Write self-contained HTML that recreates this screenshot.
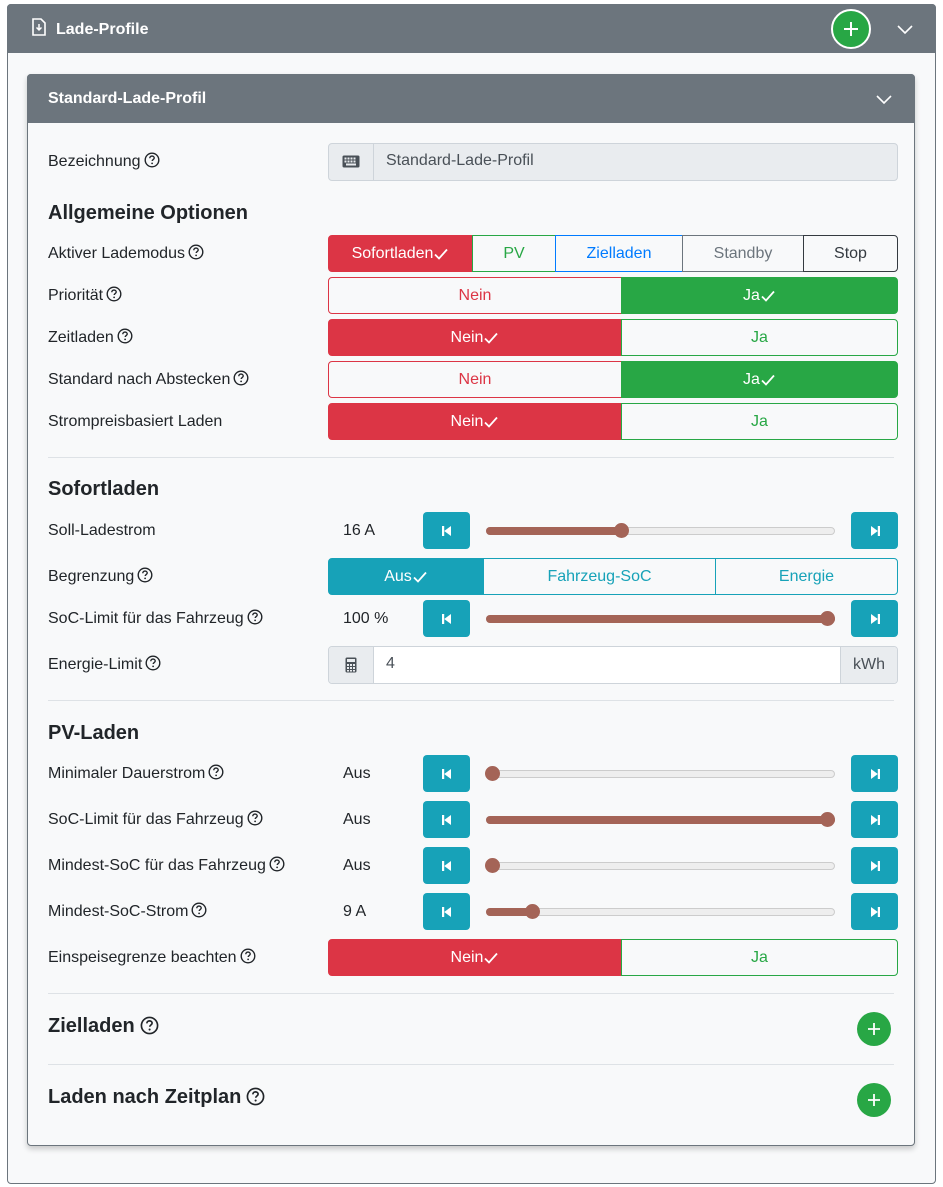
<!DOCTYPE html>
<html><head><meta charset="utf-8">
<style>
*{box-sizing:border-box}
body{margin:0;width:943px;height:1187px;background:#fff;font-family:"Liberation Sans",sans-serif;color:#212529;position:relative;overflow:hidden}
.a{position:absolute}
.lbl{position:absolute;left:48px;height:37px;line-height:38px;font-size:16px;white-space:nowrap}
.q{display:inline-block;vertical-align:-2px;margin-left:3px}
.h{position:absolute;left:48px;font-size:20px;font-weight:bold;white-space:nowrap}
.seg{position:absolute;height:37px;display:flex;align-items:center;justify-content:center;font-size:16px;border:1px solid;padding-top:1px}
.hr{position:absolute;left:48px;width:846px;height:1px;background:#dee2e6}
.btn{position:absolute;width:47px;height:37px;background:#17a2b8;border-radius:4px;display:flex;align-items:center;justify-content:center}
.trk{position:absolute;left:486px;width:349px;height:8px;border-radius:4px;background:#eee;border:1px solid #ccc}
.fill{position:absolute;left:486px;height:8px;border-radius:4px;background:#a46457}
.th{position:absolute;width:15px;height:15px;border-radius:50%;background:#a46457}
.val{position:absolute;left:343px;height:37px;line-height:38px;font-size:16px}
.plus{position:absolute;width:34px;height:34px;border-radius:50%;background:#28a745;display:flex;align-items:center;justify-content:center}
</style></head><body>
<svg width="0" height="0" style="position:absolute"><defs>
<symbol id="q" viewBox="0 0 16 16"><circle cx="8" cy="8" r="6.8" fill="none" stroke="#212529" stroke-width="1.4"/><path d="M5.8 6.2c0-1.3 1-2.1 2.2-2.1s2.2.8 2.2 1.9c0 1.5-2 1.6-2 3" fill="none" stroke="#212529" stroke-width="1.4"/><circle cx="8.1" cy="11.4" r=".9" fill="#212529"/></symbol>
<symbol id="ck" viewBox="0 0 16 16"><path d="M2 8.5l4 4 8-9" fill="none" stroke="currentColor" stroke-width="1.8"/></symbol>
</defs></svg>

<div class="a" style="left:7px;top:4px;width:929px;height:1180px;border:1px solid #6c757d;border-radius:4px;background:#f8f9fa"></div>
<div class="a" style="left:7px;top:4px;width:929px;height:49px;background:#6c757d;border-radius:4px 4px 0 0"></div>
<svg class="a" style="left:31px;top:18px" width="16" height="19" viewBox="0 0 16 19"><path d="M2 1h8l4 4v12H2z" fill="none" stroke="#fff" stroke-width="1.6"/><path d="M8 6v6M5.5 9.5L8 12l2.5-2.5" fill="none" stroke="#fff" stroke-width="1.5"/></svg>
<div class="a" style="left:56px;top:21px;color:#fff;font-weight:bold;font-size:16px">Lade-Profile</div>
<div class="a" style="left:831px;top:9px;width:40px;height:40px;border-radius:50%;background:#28a745;border:2px solid #fff;display:flex;align-items:center;justify-content:center"><svg width="16" height="16"><path d="M8 1v14M1 8h14" stroke="#fff" stroke-width="2"/></svg></div>
<svg class="a" style="left:897px;top:25px" width="16" height="10"><path d="M1 1l7 7 7-7" fill="none" stroke="#fff" stroke-width="1.6"/></svg>

<div class="a" style="left:27px;top:74px;width:888px;height:1072px;border:1px solid #6c757d;border-radius:4px;background:#f8f9fa;box-shadow:0 3px 6px rgba(0,0,0,.2)"></div>
<div class="a" style="left:27px;top:74px;width:888px;height:49px;background:#6c757d;border-radius:4px 4px 0 0"></div>
<div class="a" style="left:48px;top:90px;color:#fff;font-weight:bold;font-size:16px">Standard-Lade-Profil</div>
<svg class="a" style="left:876px;top:95px" width="16" height="10"><path d="M1 1l7 7 7-7" fill="none" stroke="#fff" stroke-width="1.6"/></svg>

<div class="lbl" style="top:143px">Bezeichnung<svg class="q" width="16" height="16"><use href="#q"/></svg></div>
<div class="a" style="left:328px;top:143px;width:570px;height:38px;border:1px solid #ced4da;border-radius:4px;background:#e9ecef"></div>
<div class="a" style="left:373px;top:143px;width:1px;height:38px;background:#ced4da"></div>
<svg class="a" style="left:342px;top:155px" width="18" height="13" viewBox="0 0 18 13"><rect x="0.5" y="0.5" width="17" height="12" rx="1.5" fill="#495057"/><g fill="#e9ecef"><rect x="2.5" y="2.5" width="2" height="2"/><rect x="5.5" y="2.5" width="2" height="2"/><rect x="8.5" y="2.5" width="2" height="2"/><rect x="11.5" y="2.5" width="2" height="2"/><rect x="2.5" y="5.5" width="2" height="2"/><rect x="5.5" y="5.5" width="2" height="2"/><rect x="8.5" y="5.5" width="2" height="2"/><rect x="11.5" y="5.5" width="2" height="2"/><rect x="4" y="8.5" width="10" height="2"/></g></svg>
<div class="a" style="left:386px;top:152px;font-size:16px;color:#495057">Standard-Lade-Profil</div>

<div class="h" style="top:202px">Allgemeine Optionen</div>

<div class="lbl" style="top:235px">Aktiver Lademodus<svg class="q" width="16" height="16"><use href="#q"/></svg></div>
<div class="seg" style="left:328px;top:235px;width:145px;background:#dc3545;border-color:#dc3545;color:#fff;border-radius:4px 0 0 4px">Sofortladen<svg width="16" height="16" style="color:#fff"><use href="#ck"/></svg></div>
<div class="seg" style="left:472px;top:235px;width:84px;border-color:#28a745;color:#28a745">PV</div>
<div class="seg" style="left:555px;top:235px;width:128px;border-color:#007bff;color:#007bff">Zielladen</div>
<div class="seg" style="left:682px;top:235px;width:122px;border-color:#6c757d;color:#6c757d">Standby</div>
<div class="seg" style="left:803px;top:235px;width:95px;border-color:#343a40;color:#343a40;border-radius:0 4px 4px 0">Stop</div>

<div class="lbl" style="top:277px">Priorität<svg class="q" width="16" height="16"><use href="#q"/></svg></div>
<div class="seg" style="left:328px;top:277px;width:294px;border-color:#dc3545;color:#dc3545;border-radius:4px 0 0 4px">Nein</div>
<div class="seg" style="left:621px;top:277px;width:277px;background:#28a745;border-color:#28a745;color:#fff;border-radius:0 4px 4px 0">Ja<svg width="16" height="16" style="color:#fff"><use href="#ck"/></svg></div>

<div class="lbl" style="top:319px">Zeitladen<svg class="q" width="16" height="16"><use href="#q"/></svg></div>
<div class="seg" style="left:328px;top:319px;width:294px;background:#dc3545;border-color:#dc3545;color:#fff;border-radius:4px 0 0 4px">Nein<svg width="16" height="16" style="color:#fff"><use href="#ck"/></svg></div>
<div class="seg" style="left:621px;top:319px;width:277px;border-color:#28a745;color:#28a745;border-radius:0 4px 4px 0">Ja</div>

<div class="lbl" style="top:361px">Standard nach Abstecken<svg class="q" width="16" height="16"><use href="#q"/></svg></div>
<div class="seg" style="left:328px;top:361px;width:294px;border-color:#dc3545;color:#dc3545;border-radius:4px 0 0 4px">Nein</div>
<div class="seg" style="left:621px;top:361px;width:277px;background:#28a745;border-color:#28a745;color:#fff;border-radius:0 4px 4px 0">Ja<svg width="16" height="16" style="color:#fff"><use href="#ck"/></svg></div>

<div class="lbl" style="top:403px">Strompreisbasiert Laden</div>
<div class="seg" style="left:328px;top:403px;width:294px;background:#dc3545;border-color:#dc3545;color:#fff;border-radius:4px 0 0 4px">Nein<svg width="16" height="16" style="color:#fff"><use href="#ck"/></svg></div>
<div class="seg" style="left:621px;top:403px;width:277px;border-color:#28a745;color:#28a745;border-radius:0 4px 4px 0">Ja</div>

<div class="hr" style="top:457px"></div>
<div class="h" style="top:478px">Sofortladen</div>

<div class="lbl" style="top:512px">Soll-Ladestrom</div>
<div class="val" style="top:512px">16 A</div>
<div class="btn" style="left:423px;top:512px"><svg width="14" height="14" viewBox="0 0 14 14"><path d="M2 2h2.2v10H2zM4.2 7L11 2v10z" fill="#fff"/></svg></div>
<div class="trk" style="top:527px"></div><div class="fill" style="top:527px;width:136px"></div><div class="th" style="left:614px;top:523px"></div>
<div class="btn" style="left:851px;top:512px"><svg width="14" height="14" viewBox="0 0 14 14"><path d="M12 2H9.8v10H12zM9.8 7L3 2v10z" fill="#fff"/></svg></div>

<div class="lbl" style="top:558px">Begrenzung<svg class="q" width="16" height="16"><use href="#q"/></svg></div>
<div class="seg" style="left:328px;top:558px;width:156px;background:#17a2b8;border-color:#17a2b8;color:#fff;border-radius:4px 0 0 4px">Aus<svg width="16" height="16" style="color:#fff"><use href="#ck"/></svg></div>
<div class="seg" style="left:483px;top:558px;width:233px;border-color:#17a2b8;color:#17a2b8">Fahrzeug-SoC</div>
<div class="seg" style="left:715px;top:558px;width:183px;border-color:#17a2b8;color:#17a2b8;border-radius:0 4px 4px 0">Energie</div>

<div class="lbl" style="top:600px">SoC-Limit für das Fahrzeug<svg class="q" width="16" height="16"><use href="#q"/></svg></div>
<div class="val" style="top:600px">100 %</div>
<div class="btn" style="left:423px;top:600px"><svg width="14" height="14" viewBox="0 0 14 14"><path d="M2 2h2.2v10H2zM4.2 7L11 2v10z" fill="#fff"/></svg></div>
<div class="trk" style="top:615px"></div><div class="fill" style="top:615px;width:349px"></div><div class="th" style="left:820px;top:611px"></div>
<div class="btn" style="left:851px;top:600px"><svg width="14" height="14" viewBox="0 0 14 14"><path d="M12 2H9.8v10H12zM9.8 7L3 2v10z" fill="#fff"/></svg></div>

<div class="lbl" style="top:646px">Energie-Limit<svg class="q" width="16" height="16"><use href="#q"/></svg></div>
<div class="a" style="left:328px;top:646px;width:570px;height:38px;border:1px solid #ced4da;border-radius:4px;background:#fff"></div>
<div class="a" style="left:329px;top:647px;width:45px;height:36px;background:#e9ecef;border-right:1px solid #ced4da;border-radius:3px 0 0 3px"></div>
<div class="a" style="left:840px;top:647px;width:57px;height:36px;background:#e9ecef;border-left:1px solid #ced4da;border-radius:0 3px 3px 0;font-size:16px;color:#495057;text-align:center;line-height:36px">kWh</div>
<svg class="a" style="left:345px;top:657px" width="12" height="16" viewBox="0 0 12 16"><rect x="0.5" y="0.5" width="11" height="15" rx="1.5" fill="#495057"/><rect x="2" y="2" width="8" height="3" fill="#e9ecef"/><g fill="#e9ecef"><rect x="2" y="7" width="2" height="2"/><rect x="5" y="7" width="2" height="2"/><rect x="8" y="7" width="2" height="2"/><rect x="2" y="10" width="2" height="2"/><rect x="5" y="10" width="2" height="2"/><rect x="8" y="10" width="2" height="2"/><rect x="2" y="13" width="2" height="1.5"/><rect x="5" y="13" width="2" height="1.5"/><rect x="8" y="13" width="2" height="1.5"/></g></svg>
<div class="a" style="left:386px;top:655px;font-size:16px;color:#495057">4</div>

<div class="hr" style="top:700px"></div>
<div class="h" style="top:722px">PV-Laden</div>

<div class="lbl" style="top:755px">Minimaler Dauerstrom<svg class="q" width="16" height="16"><use href="#q"/></svg></div>
<div class="val" style="top:755px">Aus</div>
<div class="btn" style="left:423px;top:755px"><svg width="14" height="14" viewBox="0 0 14 14"><path d="M2 2h2.2v10H2zM4.2 7L11 2v10z" fill="#fff"/></svg></div>
<div class="trk" style="top:770px"></div><div class="th" style="left:485px;top:766px"></div>
<div class="btn" style="left:851px;top:755px"><svg width="14" height="14" viewBox="0 0 14 14"><path d="M12 2H9.8v10H12zM9.8 7L3 2v10z" fill="#fff"/></svg></div>

<div class="lbl" style="top:801px">SoC-Limit für das Fahrzeug<svg class="q" width="16" height="16"><use href="#q"/></svg></div>
<div class="val" style="top:801px">Aus</div>
<div class="btn" style="left:423px;top:801px"><svg width="14" height="14" viewBox="0 0 14 14"><path d="M2 2h2.2v10H2zM4.2 7L11 2v10z" fill="#fff"/></svg></div>
<div class="trk" style="top:816px"></div><div class="fill" style="top:816px;width:349px"></div><div class="th" style="left:820px;top:812px"></div>
<div class="btn" style="left:851px;top:801px"><svg width="14" height="14" viewBox="0 0 14 14"><path d="M12 2H9.8v10H12zM9.8 7L3 2v10z" fill="#fff"/></svg></div>

<div class="lbl" style="top:847px">Mindest-SoC für das Fahrzeug<svg class="q" width="16" height="16"><use href="#q"/></svg></div>
<div class="val" style="top:847px">Aus</div>
<div class="btn" style="left:423px;top:847px"><svg width="14" height="14" viewBox="0 0 14 14"><path d="M2 2h2.2v10H2zM4.2 7L11 2v10z" fill="#fff"/></svg></div>
<div class="trk" style="top:862px"></div><div class="th" style="left:485px;top:858px"></div>
<div class="btn" style="left:851px;top:847px"><svg width="14" height="14" viewBox="0 0 14 14"><path d="M12 2H9.8v10H12zM9.8 7L3 2v10z" fill="#fff"/></svg></div>

<div class="lbl" style="top:893px">Mindest-SoC-Strom<svg class="q" width="16" height="16"><use href="#q"/></svg></div>
<div class="val" style="top:893px">9 A</div>
<div class="btn" style="left:423px;top:893px"><svg width="14" height="14" viewBox="0 0 14 14"><path d="M2 2h2.2v10H2zM4.2 7L11 2v10z" fill="#fff"/></svg></div>
<div class="trk" style="top:908px"></div><div class="fill" style="top:908px;width:46px"></div><div class="th" style="left:525px;top:904px"></div>
<div class="btn" style="left:851px;top:893px"><svg width="14" height="14" viewBox="0 0 14 14"><path d="M12 2H9.8v10H12zM9.8 7L3 2v10z" fill="#fff"/></svg></div>

<div class="lbl" style="top:939px">Einspeisegrenze beachten<svg class="q" width="16" height="16"><use href="#q"/></svg></div>
<div class="seg" style="left:328px;top:939px;width:294px;background:#dc3545;border-color:#dc3545;color:#fff;border-radius:4px 0 0 4px">Nein<svg width="16" height="16" style="color:#fff"><use href="#ck"/></svg></div>
<div class="seg" style="left:621px;top:939px;width:277px;border-color:#28a745;color:#28a745;border-radius:0 4px 4px 0">Ja</div>

<div class="hr" style="top:993px"></div>
<div class="h" style="top:1015px">Zielladen<svg class="q" width="19" height="19" style="margin-left:5px;vertical-align:-3px"><use href="#q"/></svg></div>
<div class="plus" style="left:857px;top:1012px"><svg width="14" height="14"><path d="M7 1v12M1 7h12" stroke="#fff" stroke-width="1.8"/></svg></div>

<div class="hr" style="top:1064px"></div>
<div class="h" style="top:1086px">Laden nach Zeitplan<svg class="q" width="19" height="19" style="margin-left:5px;vertical-align:-3px"><use href="#q"/></svg></div>
<div class="plus" style="left:857px;top:1083px"><svg width="14" height="14"><path d="M7 1v12M1 7h12" stroke="#fff" stroke-width="1.8"/></svg></div>
</body></html>
